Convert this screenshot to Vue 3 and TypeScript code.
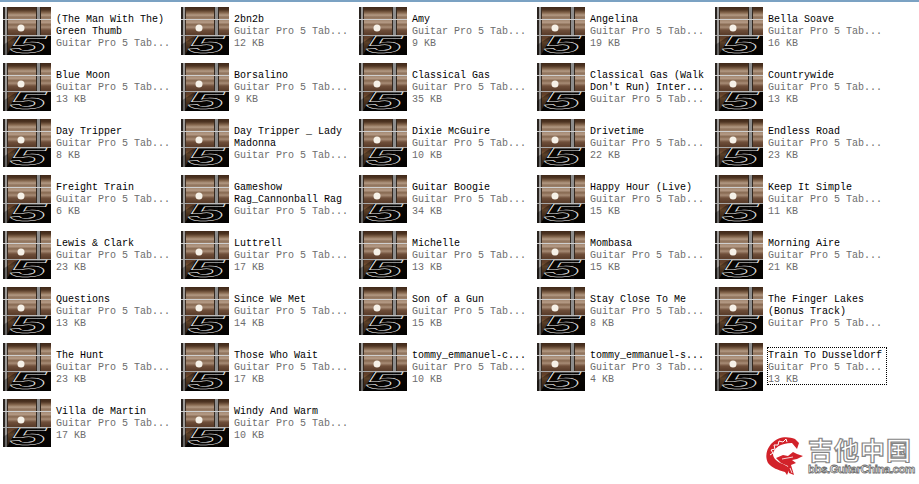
<script setup lang="ts">
interface TabFile {
  name: string
  type?: string
  size?: string
  selected?: boolean
}

const GP5 = 'Guitar Pro 5 Tab...'

// fretboard wood, top to bottom of the icon
const grain = [
  { o: 0, c: '#3f2818' },
  { o: 0.06, c: '#4e3422' },
  { o: 0.12, c: '#86684f' },
  { o: 0.17, c: '#b39a84' },
  { o: 0.21, c: '#8f735c' },
  { o: 0.32, c: '#b49a85' },
  { o: 0.37, c: '#866850' },
  { o: 0.42, c: '#a88c76' },
  { o: 0.48, c: '#6f4f3a' },
  { o: 0.56, c: '#5c3e2c' },
  { o: 0.66, c: '#62412a' },
  { o: 0.74, c: '#8a613c' },
  { o: 0.82, c: '#6e4a2c' },
  { o: 1, c: '#38220f' },
]

const files: TabFile[] = [
  { name: '(The Man With The)\nGreen Thumb' },
  { name: '2bn2b', size: '12 KB' },
  { name: 'Amy', size: '9 KB' },
  { name: 'Angelina', size: '19 KB' },
  { name: 'Bella Soave', size: '16 KB' },
  { name: 'Blue Moon', size: '13 KB' },
  { name: 'Borsalino', size: '9 KB' },
  { name: 'Classical Gas', size: '35 KB' },
  { name: "Classical Gas (Walk\nDon't Run) Inter..." },
  { name: 'Countrywide', size: '13 KB' },
  { name: 'Day Tripper', size: '8 KB' },
  { name: 'Day Tripper _ Lady\nMadonna' },
  { name: 'Dixie McGuire', size: '10 KB' },
  { name: 'Drivetime', size: '22 KB' },
  { name: 'Endless Road', size: '23 KB' },
  { name: 'Freight Train', size: '6 KB' },
  { name: 'Gameshow\nRag_Cannonball Rag' },
  { name: 'Guitar Boogie', size: '34 KB' },
  { name: 'Happy Hour (Live)', size: '15 KB' },
  { name: 'Keep It Simple', size: '11 KB' },
  { name: 'Lewis & Clark', size: '23 KB' },
  { name: 'Luttrell', size: '17 KB' },
  { name: 'Michelle', size: '13 KB' },
  { name: 'Mombasa', size: '15 KB' },
  { name: 'Morning Aire', size: '21 KB' },
  { name: 'Questions', size: '13 KB' },
  { name: 'Since We Met', size: '14 KB' },
  { name: 'Son of a Gun', size: '15 KB' },
  { name: 'Stay Close To Me', size: '8 KB' },
  { name: 'The Finger Lakes\n(Bonus Track)' },
  { name: 'The Hunt', size: '23 KB' },
  { name: 'Those Who Wait', size: '17 KB' },
  { name: 'tommy_emmanuel-c...', size: '10 KB' },
  { name: 'tommy_emmanuel-s...', type: 'Guitar Pro 3 Tab...', size: '4 KB' },
  { name: 'Train To Dusseldorf', size: '13 KB', selected: true },
  { name: 'Villa de Martin', size: '17 KB' },
  { name: 'Windy And Warm', size: '10 KB' },
]
</script>

<template>
  <div class="page">
    <svg class="defs" width="0" height="0">
      <defs>
        <linearGradient id="wood" x1="0" y1="0" x2="0" y2="1">
          <stop v-for="g in grain" :key="g.o" :offset="g.o" :stop-color="g.c" />
        </linearGradient>
      </defs>
    </svg>
    <div class="top-line"></div>
    <div class="file-grid">
      <div v-for="file in files" :key="file.name" class="file">
        <svg class="icon" viewBox="0 0 48 48" width="48" height="48">
          <rect width="48" height="48" fill="url(#wood)" />
          <rect width="2" height="48" fill="#2a2420" />
          <rect x="2" width="2" height="48" fill="#9c9a98" />
          <rect x="4" width="1" height="48" fill="#3a2c22" />
          <rect x="33" width="1" height="48" fill="#33281f" />
          <rect x="34" width="3" height="48" fill="#8e8e8e" />
          <rect x="37" width="1" height="48" fill="#33281f" />
          <rect y="12" width="48" height="1" fill="#cfcfcf" />
          <rect y="28" width="48" height="1" fill="#a8a8a8" />
          <circle cx="18" cy="21" r="3.5" fill="#f6f1e8" />
          <path d="M0 38 L12 30 H48 V48 H0 Z" fill="#000" opacity="0.35" />
          <path d="M15 29 H48 V48 H4 Z" fill="#000" opacity="0.9" />
          <text class="five" x="0" y="0" transform="translate(7 46) scale(2.7 1)">5</text>
        </svg>
        <div class="info" :class="{ selected: file.selected }">
          <div class="name">{{ file.name }}</div>
          <div class="meta">{{ file.type ?? GP5 }}</div>
          <div v-if="file.size" class="meta">{{ file.size }}</div>
        </div>
      </div>
    </div>

    <div class="logo">
      <svg class="dragon" viewBox="0 0 42 40" width="42" height="40">
        <path
          d="M29 4 C22 1 12 1 5 9 C0 15 -1 22 2 28 C6 33 12 35 19 37 L21 40 L24 33 L17 29 C11 27 7 23 7 19 C8 13 14 8 26 8 L31 14 L33 8 Z"
          fill="#d2222a"
        />
        <path
          d="M10 23 L17 20 L22 21 L27 17 L31 19 L37 21 L31 24 L26 25 L30 28 L25 30 L28 40 L23 38 L22 31 L15 28 Z"
          fill="#d2222a"
        />
        <path
          d="M4 20 L7 18 L5 15 L9 14 L8 10 L12 10 L13 6 L17 7 L20 4 L21 7"
          fill="none"
          stroke="#fff"
          stroke-width="1"
        />
        <path d="M16 24 L27 22 M24 33 L26 38" stroke="#fff" stroke-width="0.8" />
      </svg>
      <div class="logo-text">
        <div class="logo-cn">吉他中国</div>
        <div class="logo-url">bbs.GuitarChina.com</div>
      </div>
    </div>
  </div>
</template>

<style scoped>
.page {
  position: relative;
  width: 919px;
  height: 484px;
  overflow: hidden;
  background: #fff;
  font-family: "Liberation Mono", monospace;
}
.defs {
  position: absolute;
}
.top-line {
  height: 2px;
  background: #7ba2c3;
}
.file-grid {
  display: grid;
  grid-template-columns: repeat(5, 178px);
  grid-auto-rows: 56px;
  padding: 5px 0 0 3px;
}
.file {
  display: flex;
  gap: 5px;
  align-items: flex-start;
}
.icon {
  flex: none;
  display: block;
  overflow: visible;
}
.five {
  font-family: "Liberation Sans", sans-serif;
  font-size: 24px;
  font-weight: bold;
  font-style: italic;
  fill: none;
  stroke: #e8e8e8;
  stroke-width: 0.9px;
  vector-effect: non-scaling-stroke;
}
.info {
  width: 118px;
  margin-top: 5px;
  padding-top: 2px;
  height: 34px;
  font-size: 10px;
  line-height: 12px;
}
.info.selected {
  outline: 1px dotted #000;
}
.name {
  color: #000;
  white-space: pre-line;
}
.meta {
  color: #6d6d6d;
}
.logo {
  position: absolute;
  left: 766px;
  top: 435px;
  display: flex;
}
.dragon {
  display: block;
  flex: none;
}
.logo-text {
  display: flex;
  flex-direction: column;
  align-items: flex-start;
}
.logo-cn {
  font-family: "Noto Sans CJK SC", sans-serif;
  font-size: 25px;
  font-weight: 700;
  line-height: 28px;
  letter-spacing: 1px;
  color: #fff;
  -webkit-text-stroke: 1.2px #858585;
}
.logo-url {
  font-family: "Liberation Sans", sans-serif;
  font-size: 11.5px;
  font-weight: 700;
  line-height: 12px;
  letter-spacing: -0.5px;
  color: #fff;
  -webkit-text-stroke: 0.8px #6e6e6e;
}
</style>

<style>
html,
body {
  margin: 0;
  background: #fff;
}
</style>
